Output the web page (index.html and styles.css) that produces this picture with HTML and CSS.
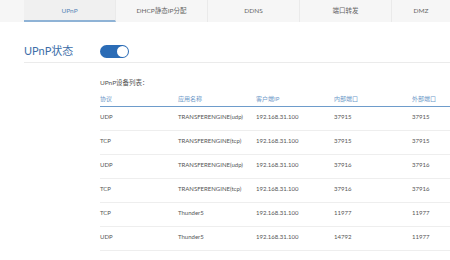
FILE: index.html
```html
<!DOCTYPE html>
<html lang="zh-CN">
<head>
    <meta charset="UTF-8">
    <title>UPnP</title>
    <link rel="stylesheet" href="styles.css">
</head>
<body>
    <div class="tabs">
        <a class="tab active">UPnP</a>
        <a class="tab">DHCP静态IP分配</a>
        <a class="tab">DDNS</a>
        <a class="tab">端口转发</a>
        <a class="tab">DMZ</a>
    </div>

    <div class="status">
        <div class="status-title">UPnP状态</div>
        <div class="switch on"><span class="knob"></span></div>
    </div>

    <div class="list">
        <div class="list-title">UPnP设备列表：</div>
        <table class="devices">
            <thead>
                <tr>
                    <th>协议</th>
                    <th>应用名称</th>
                    <th>客户端IP</th>
                    <th>内部端口</th>
                    <th class="last">外部端口</th>
                </tr>
            </thead>
            <tbody>
                <tr><td>UDP</td><td>TRANSFERENGINE(udp)</td><td>192.168.31.100</td><td>37915</td><td>37915</td></tr>
                <tr><td>TCP</td><td>TRANSFERENGINE(tcp)</td><td>192.168.31.100</td><td>37915</td><td>37915</td></tr>
                <tr><td>UDP</td><td>TRANSFERENGINE(udp)</td><td>192.168.31.100</td><td>37916</td><td>37916</td></tr>
                <tr><td>TCP</td><td>TRANSFERENGINE(tcp)</td><td>192.168.31.100</td><td>37916</td><td>37916</td></tr>
                <tr><td>TCP</td><td>Thunder5</td><td>192.168.31.100</td><td>11977</td><td>11977</td></tr>
                <tr><td>UDP</td><td>Thunder5</td><td>192.168.31.100</td><td>14792</td><td>11977</td></tr>
            </tbody>
        </table>
    </div>
</body>
</html>
```

FILE: styles.css
```css
body {
    margin: 0;
    background: #fff;
    font-family: "Lato", "Noto Sans CJK SC", sans-serif;
    color: #555;
}
.tabs {
    display: flex;
    height: 22px;
    padding-left: 24px;
    background: #f6f6f6;
    border-bottom: 2px solid #fff;
    white-space: nowrap;
    overflow: hidden;
}
.tab {
    flex: 0 0 91px;
    border-right: 1px solid #eaeaea;
    text-align: center;
    line-height: 22px;
    font-size: 6.5px;
    color: #666;
}
.tab:last-child {
    flex: 1 0 0;
    border-right: none;
}
.tab.active {
    background: #f0f0f0;
    color: #5a86b8;
    border-bottom: 2px solid #8fb3d6;
}
.status {
    display: flex;
    align-items: center;
    margin-left: 24px;
    padding: 20px 0 4px;
    border-bottom: 1px solid #ebebeb;
}
.status-title {
    width: 76px;
    font-size: 11px;
    line-height: 14px;
    color: #3d6ea8;
}
.switch {
    position: relative;
    width: 29px;
    height: 13px;
    border-radius: 7px;
    background: #ccc;
}
.switch.on {
    background: #2b6cb6;
}
.knob {
    position: absolute;
    top: 1px;
    right: 1px;
    width: 11px;
    height: 11px;
    border-radius: 50%;
    background: #fff;
}
.list {
    padding-left: 100px;
    margin-top: 15px;
}
.list-title {
    font-size: 6.5px;
    line-height: 10px;
    color: #555;
    margin-bottom: 4px;
}
.devices {
    border-collapse: collapse;
    width: 350px;
    table-layout: fixed;
    font-size: 6px;
}
.devices th,
.devices td {
    width: 78px;
    text-align: left;
    padding: 0;
    white-space: nowrap;
}
.devices th.last {
    width: 38px;
}
.devices th {
    font-weight: normal;
    color: #6c98c8;
    line-height: 10px;
    padding: 2px 0 2px;
    border-bottom: 1px solid #6e9ccb;
}
.devices td {
    line-height: 10px;
    padding: 5px 0 8px;
    border-bottom: 1px solid #eeeeee;
    color: #555;
}
```
